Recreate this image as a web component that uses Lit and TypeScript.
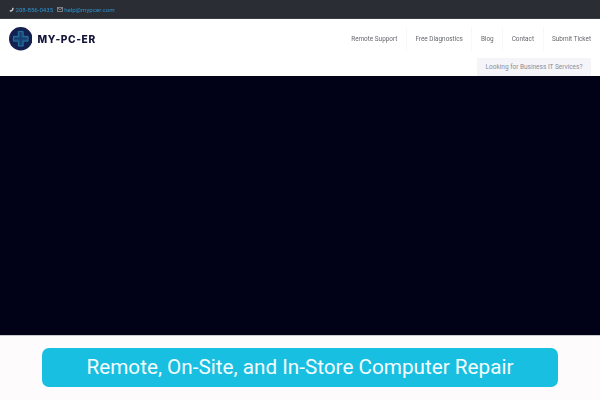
import { LitElement, html, css } from 'lit';
import { customElement } from 'lit/decorators.js';

const NAV = ['Remote Support', 'Free Diagnostics', 'Blog', 'Contact', 'Submit Ticket'];

@customElement('app-root')
class AppRoot extends LitElement {
  static styles = css`
    :host {
      display: block;
      width: 600px;
      height: 400px;
      overflow: hidden;
      background: #fdfbfc;
      font-family: Roboto, "Liberation Sans", sans-serif;
    }
    .topbar {
      height: 19px;
      box-sizing: border-box;
      padding: 0 9px;
      background: #2a2d34;
      border-bottom: 1px solid #3a3d44;
      display: flex;
      align-items: center;
      gap: 3.500px;
      font-size: 6.100px;
      color: #2b93d4;
    }
    .contact {
      display: flex;
      align-items: center;
      gap: 1.500px;
      will-change: opacity;
    }
    .contact svg {
      display: block;
    }
    .header {
      height: 57px;
      box-sizing: border-box;
      background: #fff;
      display: flex;
      justify-content: space-between;
      padding: 8px 9px 0 8.500px;
    }
    .brand {
      display: flex;
      align-items: flex-start;
      gap: 5.500px;
    }
    .logo {
      display: block;
    }
    .brand-name {
      margin-top: 5px;
      font-family: Inter, Lato, sans-serif;
      font-weight: 800;
      font-size: 10.200px;
      line-height: 14px;
      letter-spacing: 0.600px;
      color: #14143a;
      will-change: opacity;
    }
    .nav-col {
      display: flex;
      flex-direction: column;
      align-items: flex-end;
    }
    .nav {
      display: flex;
      height: 24px;
      align-items: center;
      font-size: 6.400px;
      color: #65686d;
    }
    .nav span {
      padding: 0 8.500px;
      line-height: 24px;
      border-left: 1px solid #f8f8f8;
      will-change: opacity;
    }
    .nav span:first-child {
      border-left: 0;
    }
    .nav span:last-child {
      padding-right: 0;
    }
    .biz {
      margin-top: 7px;
      height: 18px;
      padding: 0 8.500px;
      background: #f5f5f9;
      font-size: 6.500px;
      line-height: 18px;
      color: #8a8d98;
      will-change: opacity;
    }
    .hero {
      height: 260px;
      box-sizing: border-box;
      background: #010118;
      border-bottom: 1px solid #c9c9cf;
    }
    .banner-wrap {
      padding: 12px 42px 0;
    }
    .banner {
      height: 39px;
      border-radius: 7px;
      background: #19bfe0;
      color: #f4fdff;
      font-size: 20.700px;
      line-height: 39px;
      text-align: center;
    }
  `;

  render() {
    return html`
      <div class="topbar">
        <span class="contact">
          <svg width="5" height="5" viewBox="0 0 10 10">
            <path d="M7.600 .8 9.400 2.600C9.400 6.400 6.400 9.400 2.600 9.400L.8 7.600 2.800 5.800 3.900 6.600C5 6 6 5 6.600 3.900L5.800 2.800Z" fill="#c9cbd0" />
          </svg>
          208-856-0435
        </span>
        <span class="contact">
          <svg width="6" height="5" viewBox="0 0 12 10">
            <rect x=".7" y=".7" width="10.600" height="8.600" rx="1" fill="none" stroke="#c9cbd0" stroke-width="1.200" />
            <path d="M1 1.500 6 5.500 11 1.500" fill="none" stroke="#c9cbd0" stroke-width="1.100" />
          </svg>
          help@mypcer.com
        </span>
      </div>
      <div class="header">
        <div class="brand">
          <svg class="logo" width="23.500" height="23.500" viewBox="0 0 24 24">
            <circle cx="12" cy="12" r="12" fill="#14204f" />
            <path d="M9.500 4.500h5v5h5v5h-5v5h-5v-5h-5v-5h5z" fill="#1c4f80" stroke="#2c8fb5" stroke-width=".7" />
            <path d="M12 5.500v13M5.500 12h13" stroke="#16396a" stroke-width="1" />
          </svg>
          <div class="brand-name">MY-PC-ER</div>
        </div>
        <div class="nav-col">
          <div class="nav">${NAV.map((item) => html`<span>${item}</span>`)}</div>
          <div class="biz">Looking for Business IT Services?</div>
        </div>
      </div>
      <div class="hero"></div>
      <div class="banner-wrap">
        <div class="banner">Remote, On-Site, and In-Store Computer Repair</div>
      </div>
    `;
  }
}
